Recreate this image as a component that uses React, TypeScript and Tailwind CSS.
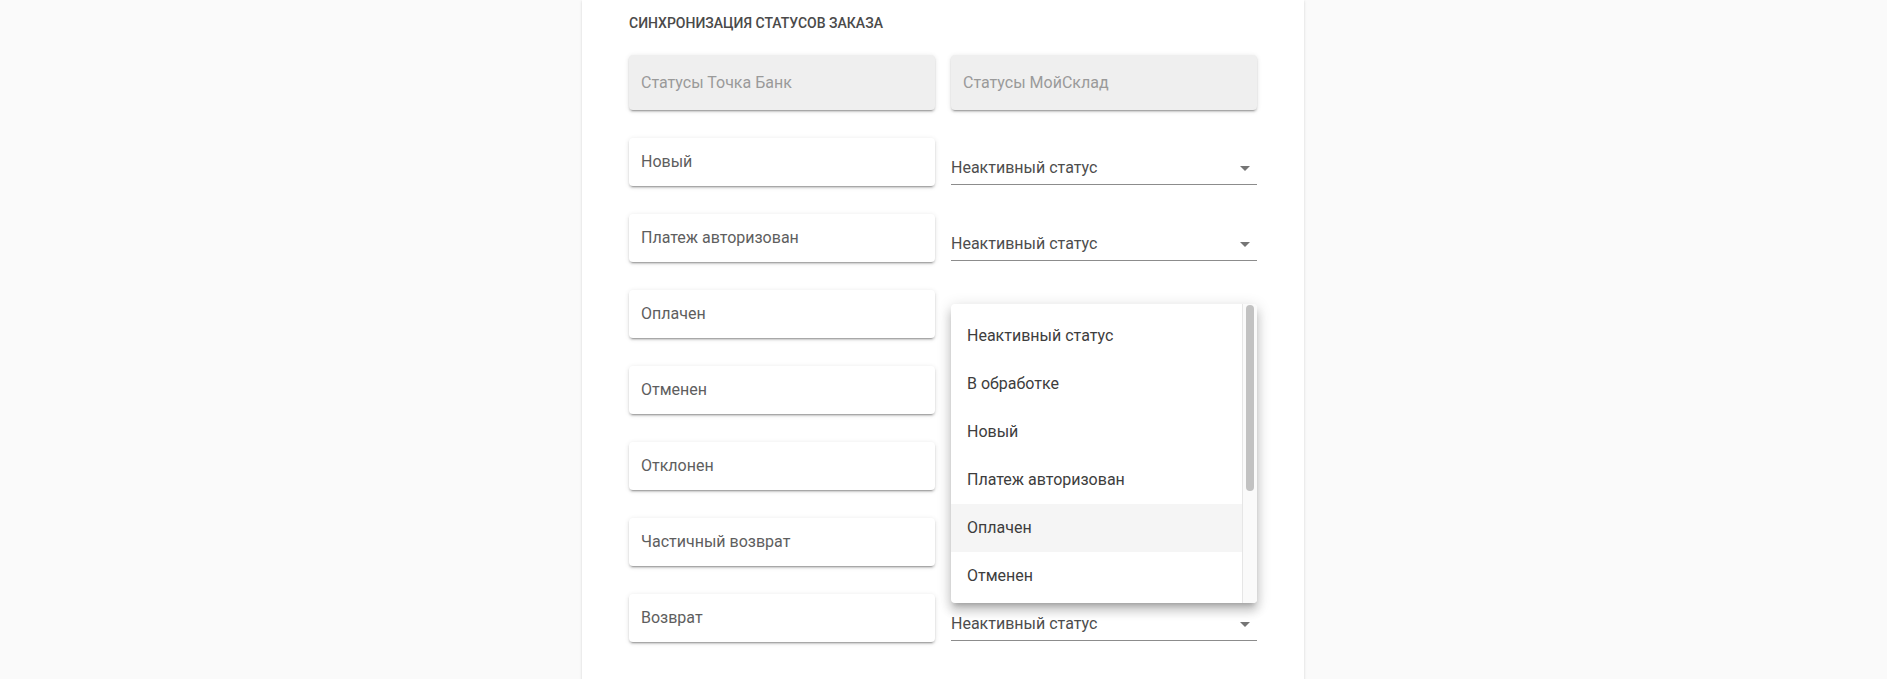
import { useState } from "react";

const ROWS = [
  "Новый",
  "Платеж авторизован",
  "Оплачен",
  "Отменен",
  "Отклонен",
  "Частичный возврат",
  "Возврат",
];

const OPTIONS = [
  "Неактивный статус",
  "В обработке",
  "Новый",
  "Платеж авторизован",
  "Оплачен",
  "Отменен",
  "Отклонен",
  "Частичный возврат",
  "Возврат",
];

const paperShadow =
  "shadow-[0_3px_1px_-2px_rgba(0,0,0,0.2),0_2px_2px_0_rgba(0,0,0,0.14),0_1px_5px_0_rgba(0,0,0,0.12)]";

/* ── standard select (closed) ─────────────────────────────────────────── */
function StatusSelect({ value }: { value: string }) {
  return (
    <div className="flex h-[48px] items-end pb-[1px]">
      <div className="relative flex h-[33px] w-full items-center border-b border-[#8c8c8c] pb-[1px]">
        <span className="text-[16px] leading-[23px] text-[#4d4d4d]">{value}</span>
        <svg viewBox="0 0 24 24" className="absolute right-0 top-[4px] h-6 w-6 fill-[#757575]">
          <path d="M7 10l5 5 5-5z" />
        </svg>
      </div>
    </div>
  );
}

export default function App() {
  const [hover] = useState(4);

  return (
    <div className="flex min-h-screen justify-center bg-[#fafafa] font-['Roboto','Liberation_Sans',sans-serif]">
      <div className="mr-[1px] w-[722px] bg-white px-[47px] pb-[60px] pt-[14px] shadow-[0_1px_3px_rgba(0,0,0,0.12),0_1px_1px_rgba(0,0,0,0.08)]">
        <h2 className="text-[14px] font-medium uppercase leading-[18px] text-[#4a4a4a]">
          Синхронизация статусов заказа
        </h2>

        <div className="relative mt-[23px] grid grid-cols-2 gap-x-[16px] gap-y-[28px]">
          {/* header row */}
          <div className={`flex h-[55px] items-center rounded-[4px] bg-[#efefef] px-3 ${paperShadow}`}>
            <span className="text-[16px] text-[#9a9a9a]">Статусы Точка Банк</span>
          </div>
          <div className={`flex h-[55px] items-center rounded-[4px] bg-[#efefef] px-3 ${paperShadow}`}>
            <span className="text-[16px] text-[#9a9a9a]">Статусы МойСклад</span>
          </div>

          {ROWS.map((r) => (
            <div key={r} className="contents">
              <div className={`flex h-[48px] items-center rounded-[4px] bg-white px-3 ${paperShadow}`}>
                <span className="text-[16px] text-[#5e5e5e]">{r}</span>
              </div>
              <StatusSelect value="Неактивный статус" />
            </div>
          ))}

          {/* open dropdown menu */}
          <div className="absolute left-[322px] top-[249px] flex h-[299px] w-[306px] overflow-hidden rounded-[4px] bg-white shadow-[0_5px_5px_-3px_rgba(0,0,0,0.2),0_8px_10px_1px_rgba(0,0,0,0.14),0_3px_14px_2px_rgba(0,0,0,0.12)]">
            <ul className="flex-1 overflow-hidden py-2">
              {OPTIONS.map((o, i) => (
                <li
                  key={o}
                  className={`flex h-[48px] items-center px-4 text-[16px] text-[#3d3d3d] ${i === hover ? "bg-[#f5f5f5]" : ""}`}
                >
                  {o}
                </li>
              ))}
            </ul>
            <div className="w-[15px] shrink-0 border-l border-[#e6e6e6] bg-[#fafafa] pl-[3px] pt-[1px]">
              <div className="h-[186px] w-[8px] rounded-full bg-[#c2c2c2]" />
            </div>
          </div>
        </div>
      </div>
    </div>
  );
}
